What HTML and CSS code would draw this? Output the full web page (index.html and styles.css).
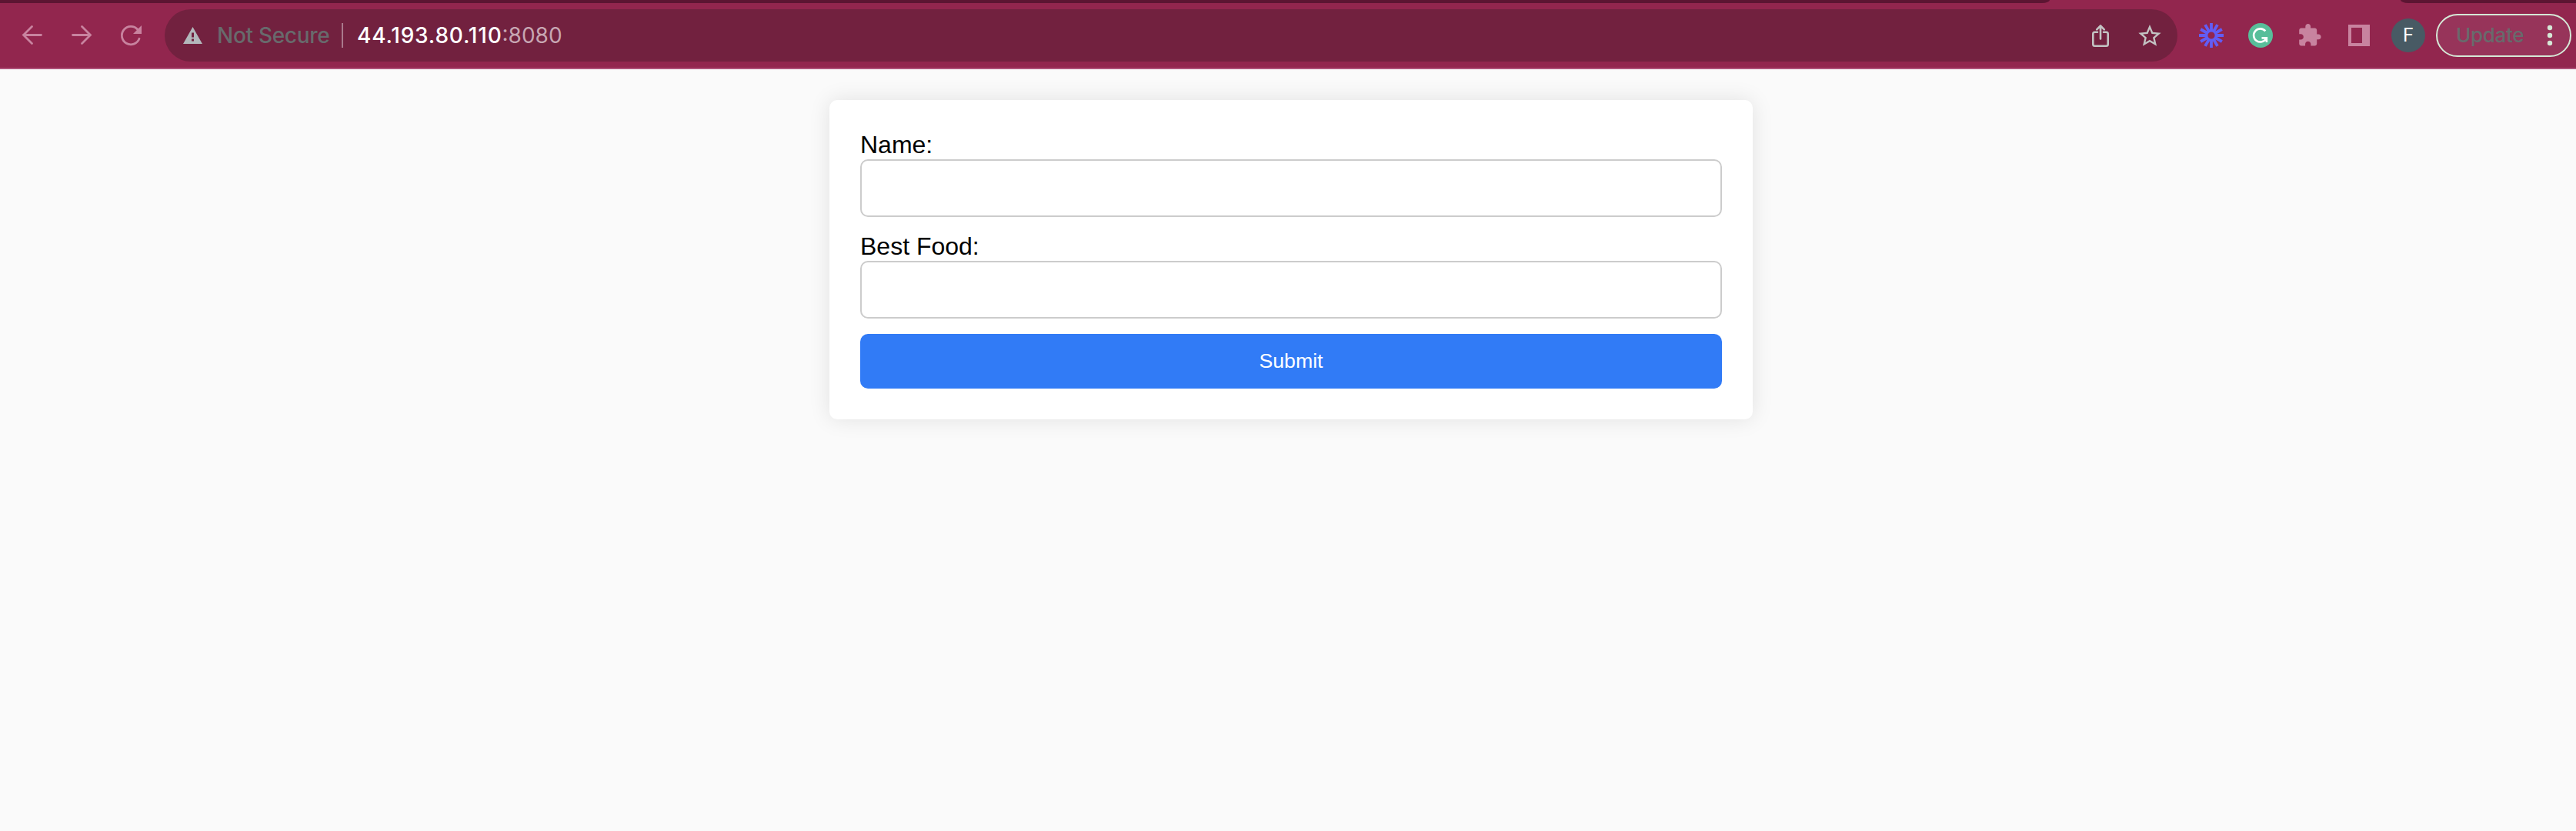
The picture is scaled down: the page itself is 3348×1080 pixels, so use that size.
FILE: index.html
```html
<!DOCTYPE html>
<html lang="en">
<head>
<meta charset="utf-8">
<title>Best Food</title>
<link rel="stylesheet" href="styles.css">
</head>
<body>
<header class="browser">
  <div class="tabstrip"><div class="tabs-left"></div><div class="tabs-right"></div></div>
  <div class="toolbar">
    <nav class="group">
      <svg class="icon line" viewBox="0 0 40 40"><path d="M31.500 19.500H8.500M19.500 8.500 8.500 19.500 19.500 30.500"/></svg>
      <svg class="icon line" viewBox="0 0 40 40"><path d="M8.500 19.500H31M20.500 8.500 31.500 19.500 20.500 30.500"/></svg>
      <svg class="icon line" viewBox="0 0 40 40"><path d="M31 24.300A11.700 11.700 0 1 1 28.800 12.300"/><path class="solid" d="M34 7V18H23Z"/></svg>
    </nav>
    <div class="omnibox">
      <svg class="warning" viewBox="0 0 26 22"><path fill-rule="evenodd" d="M12.500 0 25 22H0ZM11 7.500V13.500H14V7.500ZM11 15.500V18.500H14V15.500Z"/></svg>
      <span class="insecure">Not Secure</span>
      <span class="divider"></span>
      <span class="url"><span class="host">44.193.80.110</span><span class="port">:8080</span></span>
      <div class="group actions">
        <svg class="icon share" viewBox="0 0 40 40"><path d="M16 15.800H12.500Q10.300 15.800 10.300 18V31.500Q10.300 33.800 12.500 33.800H27.500Q29.700 33.800 29.700 31.500V18Q29.700 15.800 27.500 15.800H24M20 24.500V8M15.200 12.300 20 7.500 24.800 12.300"/></svg>
        <svg class="icon star" viewBox="0 0 40 40"><path transform="translate(2.400 3.100) scale(1.465)" d="M22 9.240l-7.190-.62L12 2 9.190 8.630 2 9.240l5.460 4.730L5.820 21 12 17.270 18.180 21l-1.630-7.030L22 9.240zM12 15.400l-3.760 2.270 1-4.280-3.320-2.880 4.380-.38L12 6.100l1.710 4.040 4.380.38-3.320 2.880 1 4.280L12 15.400z"/></svg>
      </div>
    </div>
    <div class="group">
      <svg class="icon burst" viewBox="-20 -20 40 40"><circle r="6"/><path d="M0-6V-16M0 6V16M6 0H16M-6 0H-16M3-5.200 8-13.860M5.200-3 13.860-8M5.200 3 13.860 8M3 5.200 8 13.860M-3 5.200-8 13.860M-5.200 3-13.860 8M-5.200-3-13.860-8M-3-5.200-8-13.860"/></svg>
      <svg class="icon writer" viewBox="-20 -20 40 40"><circle r="16"/><path d="M6.300-5.600A8.600 8.600 0 1 0 7.300 4M1.500 3.400H7.900V9"/></svg>
      <svg class="icon tint" viewBox="0 0 40 40"><path transform="translate(3.500 3.700) scale(1.353)" d="M20.500 11H19V7c0-1.100-.9-2-2-2h-4V3.500C13 2.120 11.880 1 10.500 1S8 2.120 8 3.500V5H4c-1.100 0-1.990.9-1.990 2v3.800H3.500c1.490 0 2.700 1.210 2.700 2.700s-1.210 2.700-2.700 2.700H2V20c0 1.100.9 2 2 2h3.800v-1.500c0-1.490 1.210-2.700 2.700-2.700 1.490 0 2.700 1.210 2.700 2.700V22H17c1.100 0 2-.9 2-2v-4h1.500c1.380 0 2.500-1.120 2.500-2.500S21.880 11 20.500 11z"/></svg>
      <svg class="icon tint" viewBox="0 0 40 40"><path fill-rule="evenodd" d="M6 6H34V34H6ZM10 10V30H24V10Z"/></svg>
      <span class="avatar">F</span>
    </div>
    <div class="update">
      <span class="update-label">Update</span>
      <svg class="dots" viewBox="0 0 8 28"><circle cx="4" cy="4" r="3.200"/><circle cx="4" cy="14" r="3.200"/><circle cx="4" cy="24" r="3.200"/></svg>
    </div>
  </div>
</header>
<main>
  <form class="card">
    <label for="name">Name:</label>
    <input type="text" id="name" name="name">
    <label for="food">Best Food:</label>
    <input type="text" id="food" name="food">
    <button type="button">Submit</button>
  </form>
</main>
</body>
</html>
```
FILE: styles.css
```css
* { box-sizing: border-box; }
body {
  margin: 0;
  min-height: 1080px;
  background: #fafafa;
  font-family: "Liberation Sans", Arial, sans-serif;
}
.browser {
  height: 90px;
  background: #92264e;
  border-bottom: 2px solid #ad5077;
  font-family: Inter, sans-serif;
}
.tabstrip { display: flex; justify-content: space-between; height: 4px; }
.tabs-left { width: 2664px; background: #5c1532; border-bottom-right-radius: 10px 4px; }
.tabs-right { width: 228px; background: #5c1532; border-bottom-left-radius: 10px 4px; }
.toolbar { display: flex; align-items: center; height: 84px; padding: 0 6px 0 22px; }
.group { display: flex; align-items: center; gap: 24px; }
.icon { display: block; width: 40px; height: 40px; }
.line { fill: none; stroke: #c8839f; stroke-width: 2.8; stroke-linecap: round; }
.line .solid { fill: #c8839f; stroke: none; }
.tint { fill: #c8839f; }
.omnibox {
  flex: 1;
  display: flex;
  align-items: center;
  height: 68px;
  margin: 0 24px;
  padding: 0 16px 0 24px;
  border-radius: 34px;
  background: #72213f;
  font-size: 28px;
  line-height: 34px;
  white-space: nowrap;
}
.warning { width: 26px; height: 22px; fill: #b3b7bb; }
.insecure { width: 162px; margin-left: 18px; color: #686a6c; font-weight: 500; letter-spacing: -0.3px; }
.divider { width: 2px; height: 32px; background: #aa7a8c; }
.url { margin-left: 18px; }
.host { color: #fff; font-weight: 500; letter-spacing: 0.8px; }
.port { color: #c7a6b2; }
.actions { margin-left: auto; }
.share { fill: none; stroke: #c3c3c3; stroke-width: 2.6; stroke-linecap: round; stroke-linejoin: round; }
.star { fill: #c3c3c3; }
.burst { fill: none; stroke: #625df5; stroke-width: 3.8; }
.burst circle { stroke-width: 2.8; }
.writer circle { fill: #58be9a; }
.writer path { fill: none; stroke: #fff; stroke-width: 2.6; }
.avatar {
  width: 44px;
  height: 44px;
  margin: 0 -2px;
  border-radius: 50%;
  background: #485a64;
  color: #fff;
  font-size: 24px;
  line-height: 44px;
  text-align: center;
}
.update {
  display: flex;
  align-items: center;
  justify-content: space-between;
  width: 176px;
  height: 56px;
  margin-left: 16px;
  padding: 0 22px 0 24px;
  border: 2px solid #d5e8d6;
  border-radius: 28px;
  background: #97345a;
}
.update-label { color: #686a6c; font-size: 26px; line-height: 32px; font-weight: 500; letter-spacing: -0.3px; }
.dots { width: 8px; height: 28px; fill: #d5e8d6; }
main { display: flex; justify-content: center; padding: 40px 0 0 8px; }
.card {
  display: flex;
  flex-direction: column;
  width: 1200px;
  padding: 40px;
  border-radius: 10px;
  background: #fff;
  box-shadow: 0 0 28px rgba(0, 0, 0, 0.1);
}
.card label { height: 37px; font-size: 32px; line-height: 37px; color: #000; }
.card input {
  height: 75px;
  margin: 0 0 20px;
  padding: 20px;
  border: 2px solid #ccc;
  border-radius: 10px;
  background: #fff;
  font-size: 26.667px;
}
.card button {
  height: 71px;
  padding: 0;
  border: 0;
  border-radius: 10px;
  background: #317bf6;
  color: #fff;
  font-family: inherit;
  font-size: 26.667px;
}
```
